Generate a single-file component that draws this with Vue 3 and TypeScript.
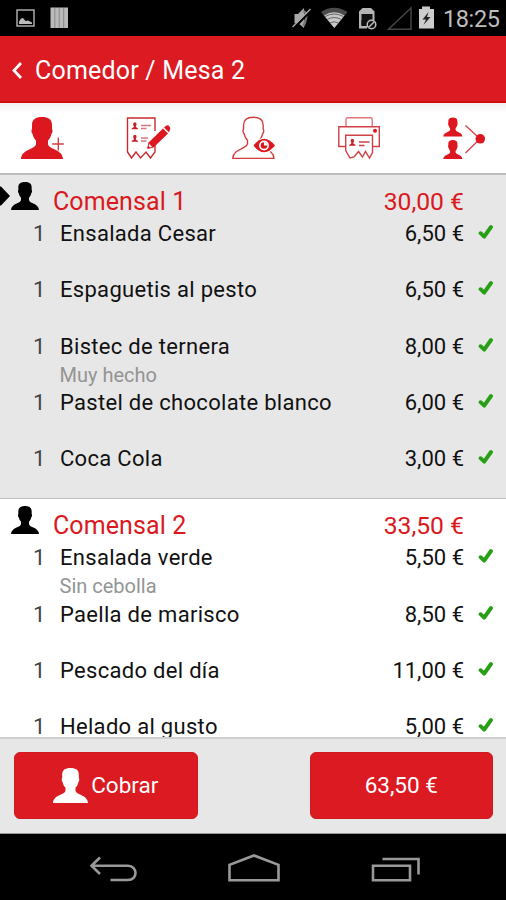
<script setup lang="ts">
interface Item {
  qty: number
  name: string
  price: string
  note?: string
}

interface Diner {
  name: string
  total: string
  active: boolean
  items: Item[]
}

const diners: Diner[] = [
  {
    name: 'Comensal 1',
    total: '30,00 €',
    active: true,
    items: [
      { qty: 1, name: 'Ensalada Cesar', price: '6,50 €' },
      { qty: 1, name: 'Espaguetis al pesto', price: '6,50 €' },
      { qty: 1, name: 'Bistec de ternera', price: '8,00 €', note: 'Muy hecho' },
      { qty: 1, name: 'Pastel de chocolate blanco', price: '6,00 €' },
      { qty: 1, name: 'Coca Cola', price: '3,00 €' },
    ],
  },
  {
    name: 'Comensal 2',
    total: '33,50 €',
    active: false,
    items: [
      { qty: 1, name: 'Ensalada verde', price: '5,50 €', note: 'Sin cebolla' },
      { qty: 1, name: 'Paella de marisco', price: '8,50 €' },
      { qty: 1, name: 'Pescado del día', price: '11,00 €' },
      { qty: 1, name: 'Helado al gusto', price: '5,00 €' },
    ],
  },
]

const person =
  'M21 0C27.500 0 31 2.500 31 8V12C32 13 31.6 16 30.4 17C29.8 20 28.6 22 27 23.5V27C27.500 32.500 41.500 32 42 42H0C0.500 32 14.500 32.500 15 27V23.5C13.4 22 12.2 20 11.6 17C10.4 16 10 13 11 12V8C11 2.500 14.500 0 21 0Z'
</script>

<template>
  <div class="screen">
    <div class="status">
      <svg class="status-left" width="80" height="36" viewBox="0 0 80 36">
        <rect x="17" y="10" width="17" height="16" fill="none" stroke="#aaa" stroke-width="1.5" />
        <path d="M19 24V21.500L21 18.500L23 18L25.500 21L28 20.500L32 22.500V24Z" fill="#bbb" />
        <path d="M50.500 7.500H68V28H50.500Z" fill="#bbb" />
        <path d="M54.800 8V28M59.200 8V28M63.700 8V28" stroke="#888" stroke-width="1" />
      </svg>
      <svg class="status-right" width="150" height="36" viewBox="286 0 150 36">
        <path d="M294.500 14H298L304 8V28L298 23H294.500Z" fill="#aaa" />
        <path d="M303.500 11Q307 13 306 18T303.500 26" fill="none" stroke="#777" stroke-width="2.500" />
        <path d="M293.500 28.500L311.500 10" stroke="#000" stroke-width="2.500" />
        <path d="M292.500 27L310.500 9" stroke="#aaa" stroke-width="1.500" />
        <path d="M321 12Q334 3.500 347.500 12L334.300 28Z" fill="#4b4b4b" />
        <path d="M324 15.500Q334 9 344.500 15.500L334.300 28Z" fill="#c8c8c8" />
        <path d="M325 16.500Q334 11.500 343.500 16.500M327 19.500Q334 15.500 341.500 19.500M330 23Q334 20.500 338.500 23" fill="none" stroke="#666" stroke-width="1" />
        <path d="M362.500 8H371L374.500 11.500V20H359V11.500Z" fill="#b5b5b5" />
        <path d="M359 11.500H361.500V25.500H367V28.500H359Z" fill="#b5b5b5" />
        <path d="M361.500 14H372.500V26H361.500Z" fill="#111" />
        <circle cx="371.500" cy="24.500" r="4.300" fill="#111" stroke="#bbb" stroke-width="1.500" />
        <path d="M368.500 27.500L374.500 21.500" stroke="#bbb" stroke-width="1.500" />
        <path d="M388.500 29.200H411V8Z" fill="none" stroke="#444" stroke-width="1.500" />
        <path d="M419 9H422V6.500H430V9H434V28.500H419Z" fill="#ccc" />
        <path d="M428.500 12L422.500 19.500H426L423.500 25L430.500 17H427Z" fill="#222" />
      </svg>
      <span class="clock">18:25</span>
    </div>

    <header class="header">
      <svg width="12" height="20" viewBox="0 0 12 20">
        <path d="M10 2L3 9.500L10 17" fill="none" stroke="#fff" stroke-width="2.800" />
      </svg>
      <h1 class="title">Comedor / Mesa 2</h1>
    </header>

    <nav class="toolbar">
      <svg class="tool" viewBox="0 0 52 44">
        <path :d="person" fill="#dc171f" transform="translate(4 1)" />
        <path d="M35.200 28H46.800M41.300 21.500V34.500" stroke="#cf4046" stroke-width="1.400" />
      </svg>
      <svg class="tool" viewBox="0 0 52 44">
        <g fill="none" stroke="#c92b30" stroke-width="1.400">
          <path d="M32 15V2H4.500V36L8.500 42L13 36L17.500 42L23 36L27.500 42L32 36V27" />
          <path d="M18 9.500H28M18 12.500H23.500M18 22H25M18 25H23.500" stroke="#d7777b" />
        </g>
        <path :d="person" fill="#c5232a" transform="translate(8.500 6.500) scale(.16)" />
        <path :d="person" fill="#c5232a" transform="translate(8.500 19) scale(.16)" />
        <path d="M24.500 32.500L25.600 26.500L40 12.500L45 17.500L30.500 31.500Z" fill="#dc171f" />
        <path d="M41 11.500L43 9.800Q45 8.500 46.500 10.500Q48 12.500 46.800 14.200L45.800 16.200Z" fill="#dc171f" />
        <path d="M24.700 32.300L25.800 27.200L30 31.300Z" fill="#fff" stroke="#dc171f" stroke-width=".8" />
        <path d="M24.500 32.500L25.200 29.800L27.400 31.800Z" fill="#dc171f" />
      </svg>
      <svg class="tool" viewBox="0 0 52 44">
        <path :d="person" fill="#fff" stroke="#d63a40" stroke-width="1.400" transform="translate(4.800 1.200) scale(.98)" />
        <path d="M24 30Q35.500 14 48.500 30Q35.500 45 24 30Z" fill="#fff" />
        <path d="M25.500 29.500Q36 16 47 29.500Q36 43 25.500 29.500Z" fill="#dc171f" />
        <circle cx="36" cy="29.500" r="5" fill="#fff" />
        <circle cx="36" cy="29.500" r="3.300" fill="#dc171f" />
        <path d="M36 26V29.500H39.500Q39 26 36 26Z" fill="#fff" />
      </svg>
      <svg class="tool" viewBox="0 0 52 44">
        <g fill="none" stroke="#d04045" stroke-width="1.400">
          <path d="M12 11V3.500Q12 1.800 13.700 1.800H36.500Q38.200 1.800 38.200 3.500V11" stroke="#df777b" />
          <path d="M11.500 30.500H4.800V10.800H45.300V30.500H38.700" />
          <path d="M11.700 19.300H38.500V36.500L35.500 42L31.500 35.500L28.500 41L24.500 35.500L20 41L16 42L11.700 34.500Z" fill="#fff" />
          <path d="M25 26H35.500M25 29.500H30.500" />
        </g>
        <circle cx="41" cy="14.800" r="2" fill="#dc171f" />
        <path :d="person" fill="#c5232a" transform="translate(15 23) scale(.16)" />
      </svg>
      <svg class="tool" viewBox="0 0 52 44">
        <path :d="person" fill="#dc171f" transform="translate(4.300 1.500) scale(.455)" />
        <path :d="person" fill="#dc171f" transform="translate(4.300 24) scale(.455)" />
        <path d="M26.500 9.500L41 22.800L26.500 37" fill="none" stroke="#d9474c" stroke-width="1.400" />
        <circle cx="41.300" cy="22.800" r="4.800" fill="#dc171f" />
      </svg>
    </nav>

    <main class="list">
      <section v-for="diner in diners" :key="diner.name" class="diner" :class="{ active: diner.active }">
        <div class="diner-head">
          <svg class="marker" width="11" height="20" viewBox="0 0 11 20">
            <path v-if="diner.active" d="M0 0.500H1L10 10L1 19.500H0Z" fill="#000" />
          </svg>
          <svg class="avatar" viewBox="0 0 42 42"><path :d="person" /></svg>
          <span class="diner-name">{{ diner.name }}</span>
          <span class="diner-total">{{ diner.total }}</span>
        </div>
        <div v-for="item in diner.items" :key="item.name" class="item">
          <div class="line">
            <span class="qty">{{ item.qty }}</span>
            <span class="name">{{ item.name }}</span>
            <span class="price">{{ item.price }}</span>
            <svg class="check" width="16" height="16" viewBox="0 0 16 16">
              <path d="M2.600 9.200L6.200 12.600L13 3" fill="none" stroke="#28a015" stroke-width="3.900" stroke-linejoin="round" stroke-linecap="round" />
            </svg>
          </div>
          <div v-if="item.note" class="note">{{ item.note }}</div>
        </div>
      </section>
    </main>

    <footer class="footer">
      <button class="btn" type="button">
        <svg class="btn-icon" viewBox="0 0 42 42"><path :d="person" fill="#fff" /></svg>
        <span class="btn-text">Cobrar</span>
      </button>
      <button class="btn" type="button"><span class="btn-text">63,50 €</span></button>
    </footer>

    <div class="navbar">
      <svg width="506" height="67" viewBox="0 833 506 67" fill="none" stroke="#999" stroke-width="2.600">
        <path d="M100 856.500L91.500 864.800L100 873M92 864.800H128C138 864.800 138 879 128 879H110.500" />
        <path d="M229.500 879.300V863.800L254 854.500L278.500 863.800V879.300Z" />
        <path d="M373 864.800H410V879.300H373ZM382.500 858H418.500V873.500" />
      </svg>
    </div>
  </div>
</template>

<style>
body {
  margin: 0;
}
</style>

<style scoped>
.screen {
  display: flex;
  flex-direction: column;
  width: 506px;
  height: 900px;
  overflow: hidden;
  background: #fff;
  font-family: Roboto, 'Liberation Sans', sans-serif;
  color: #111;
}
.status {
  display: flex;
  flex: none;
  height: 36px;
  background: #000;
}
.status-right {
  margin-left: 206px;
}
.clock {
  margin-left: 7px;
  font-size: 23.500px;
  letter-spacing: -0.4px;
  line-height: 38px;
  color: #bdbdbd;
}
.header {
  display: flex;
  flex: none;
  align-items: center;
  box-sizing: border-box;
  height: 67px;
  padding: 4px 0 0 11px;
  background: #dc1a21;
  border-bottom: 2px solid #d2090d;
}
.title {
  margin: 0 0 0 12px;
  font-size: 25px;
  font-weight: 400;
  line-height: 30px;
  letter-spacing: 0.2px;
  white-space: nowrap;
  color: #fff;
}
.toolbar {
  display: flex;
  flex: none;
  justify-content: space-between;
  box-sizing: border-box;
  height: 72px;
  padding: 13px 15px 0 17px;
  background: linear-gradient(#f2eeee, #fff 10px);
  border-bottom: 2px solid #bdbdbd;
}
.tool {
  width: 52px;
  height: 44px;
}
.list {
  flex: none;
  height: 562px;
  overflow: hidden;
}
.diner {
  background: #fff;
}
.diner.active {
  background: #e7e7e7;
  border-bottom: 1px solid #bebebe;
}
.diner-head {
  display: flex;
  height: 42px;
}
.marker {
  flex: none;
  margin-top: 11px;
}
.avatar {
  width: 28px;
  height: 28px;
  margin-top: 7px;
}
.diner-name,
.diner-total {
  padding-top: 12px;
  font-size: 25px;
  line-height: 30px;
  color: #da1920;
}
.diner-name {
  flex: 1;
  margin-left: 14px;
  letter-spacing: 0.1px;
}
.diner-total {
  margin-right: 42px;
  font-size: 24.700px;
}
.item {
  box-sizing: border-box;
  height: 56.3px;
  padding-top: 3px;
}
.line {
  display: flex;
  font-size: 22px;
  line-height: 28px;
}
.qty {
  width: 60px;
  box-sizing: border-box;
  padding-left: 33px;
  color: #444;
}
.name {
  flex: 1;
  letter-spacing: 0.3px;
  white-space: nowrap;
}
.price {
  text-align: right;
}
.check {
  margin: 4px 12px 0 14px;
}
.note {
  padding-left: 59.500px;
  font-size: 20px;
  line-height: 28px;
  color: #949494;
}
.footer {
  display: flex;
  flex: none;
  justify-content: space-between;
  align-items: flex-start;
  box-sizing: border-box;
  height: 97px;
  padding: 13px 13px 0 14px;
  background: #e7e7e7;
  border-top: 2px solid #cfcfcf;
  border-bottom: 1px solid #999;
}
.btn {
  display: flex;
  align-items: center;
  justify-content: center;
  box-sizing: border-box;
  width: 183.500px;
  height: 67px;
  padding: 0 0 1px;
  border: 1px solid #cf1a20;
  border-radius: 6px;
  background: #dc1a21;
  color: #fff;
  font-family: inherit;
}
.btn-icon {
  width: 35px;
  height: 35px;
  margin-right: 3px;
}
.btn-text {
  margin-top: -1px;
  font-size: 22.500px;
  line-height: 28px;
  white-space: nowrap;
}
.navbar {
  flex: none;
  height: 66px;
  background: #000;
}
.navbar svg {
  display: block;
}
</style>
